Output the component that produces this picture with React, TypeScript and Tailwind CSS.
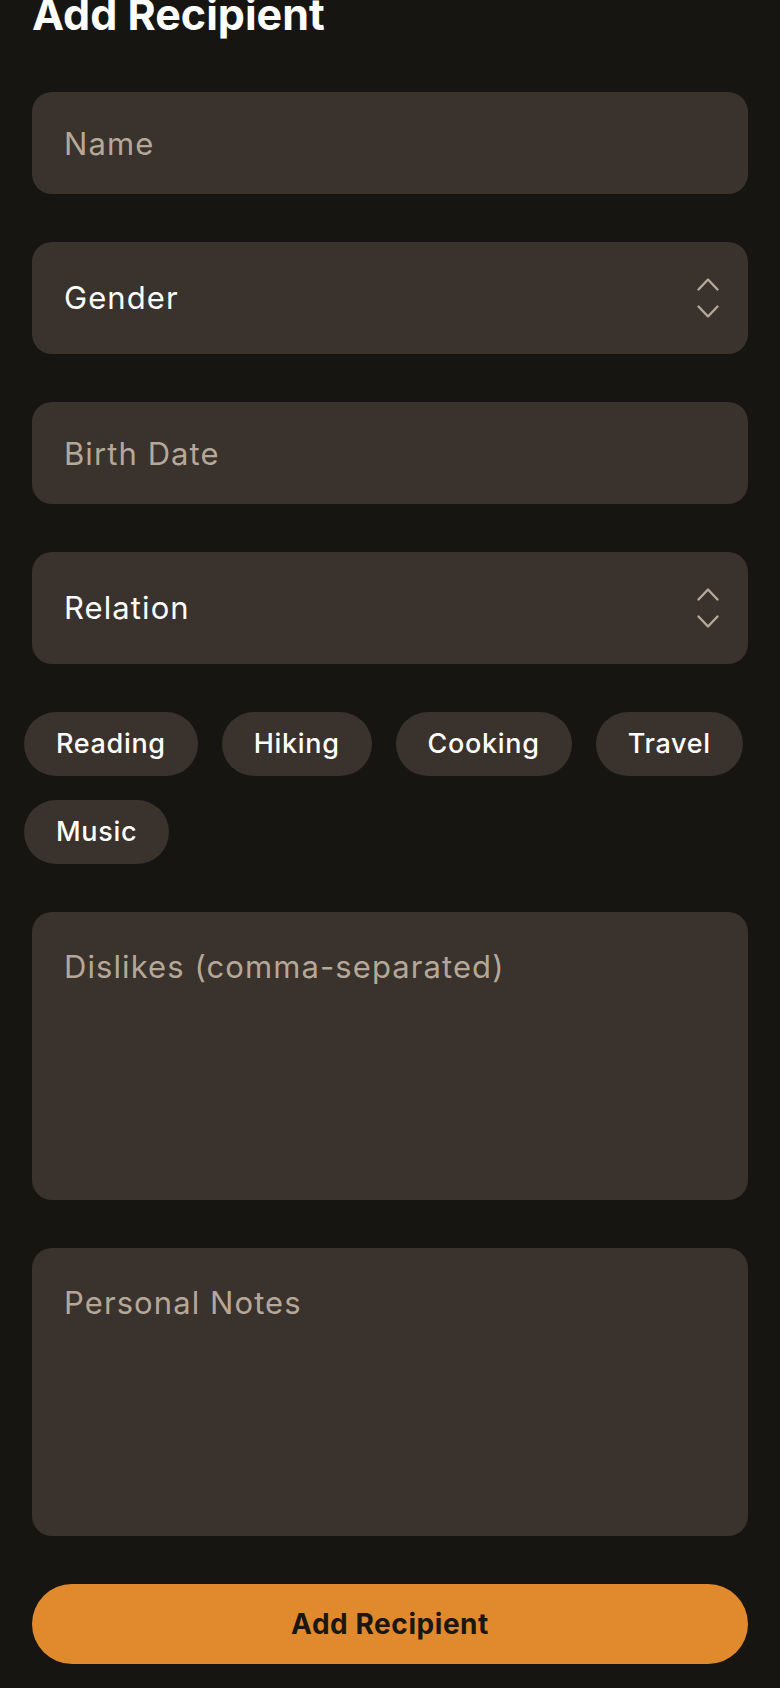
import React, { useState } from 'react';

const interests = ['Reading', 'Hiking', 'Cooking', 'Travel', 'Music'];

// Up/down chevrons drawn on the right of the select fields
const ExpandIcon = () => (
  <svg
    width="24"
    height="42"
    viewBox="0 0 24 42"
    fill="none"
    stroke="#b5a898"
    strokeWidth="2.4"
    strokeLinecap="round"
    strokeLinejoin="round"
    className="pointer-events-none absolute right-[28px] top-1/2 -translate-y-1/2"
  >
    <path d="M2.5 12.5 L12 2.5 L21.5 12.5" />
    <path d="M2.5 29.5 L12 39.5 L21.5 29.5" />
  </svg>
);

const fieldBase =
  'w-full rounded-[20px] bg-[#3a322c] px-8 text-[31px] tracking-[0.035em] text-white placeholder:text-[#b5a898] outline-none';

const SelectField = ({ label, options }: { label: string; options: string[] }) => (
  <div className="relative">
    <select
      defaultValue=""
      className={`${fieldBase} h-[112px] appearance-none`}
    >
      <option value="">{label}</option>
      {options.map((o) => (
        <option key={o} value={o}>
          {o}
        </option>
      ))}
    </select>
    <ExpandIcon />
  </div>
);

export default function App() {
  const [selected, setSelected] = useState<string[]>([]);

  const toggle = (name: string) => {
    setSelected((prev) =>
      prev.includes(name) ? prev.filter((n) => n !== name) : [...prev, name]
    );
  };

  return (
    <div
      className="min-h-screen bg-[#171511] px-8 pb-6"
      style={{ fontFamily: 'Inter, "Noto Sans", sans-serif' }}
    >
      <h1 className="-mt-[7px] text-[43px] font-bold leading-[43px] text-white">
        Add Recipient
      </h1>

      <div className="mt-[56px] flex flex-col gap-12">
        <input placeholder="Name" className={`${fieldBase} h-[102px]`} />

        <SelectField label="Gender" options={['Female', 'Male', 'Other']} />

        <input placeholder="Birth Date" className={`${fieldBase} h-[102px]`} />

        <SelectField
          label="Relation"
          options={['Family', 'Friend', 'Partner', 'Colleague']}
        />

        <div className="-mx-2 flex flex-wrap gap-6">
          {interests.map((name) => (
            <button
              key={name}
              onClick={() => toggle(name)}
              className={`h-16 rounded-full px-8 text-[27px] font-medium tracking-[0.025em] text-white ${
                selected.includes(name) ? 'bg-[#e0892d]' : 'bg-[#3a322c]'
              }`}
            >
              {name}
            </button>
          ))}
        </div>

        <textarea
          placeholder="Dislikes (comma-separated)"
          className={`${fieldBase} h-[288px] resize-none py-8 leading-[1.5]`}
        />

        <textarea
          placeholder="Personal Notes"
          className={`${fieldBase} h-[288px] resize-none py-8 leading-[1.5]`}
        />

        <button className="h-20 w-full rounded-full bg-[#e0892d] text-[28px] font-bold tracking-[0.02em] text-[#1a1611]">
          Add Recipient
        </button>
      </div>
    </div>
  );
}
